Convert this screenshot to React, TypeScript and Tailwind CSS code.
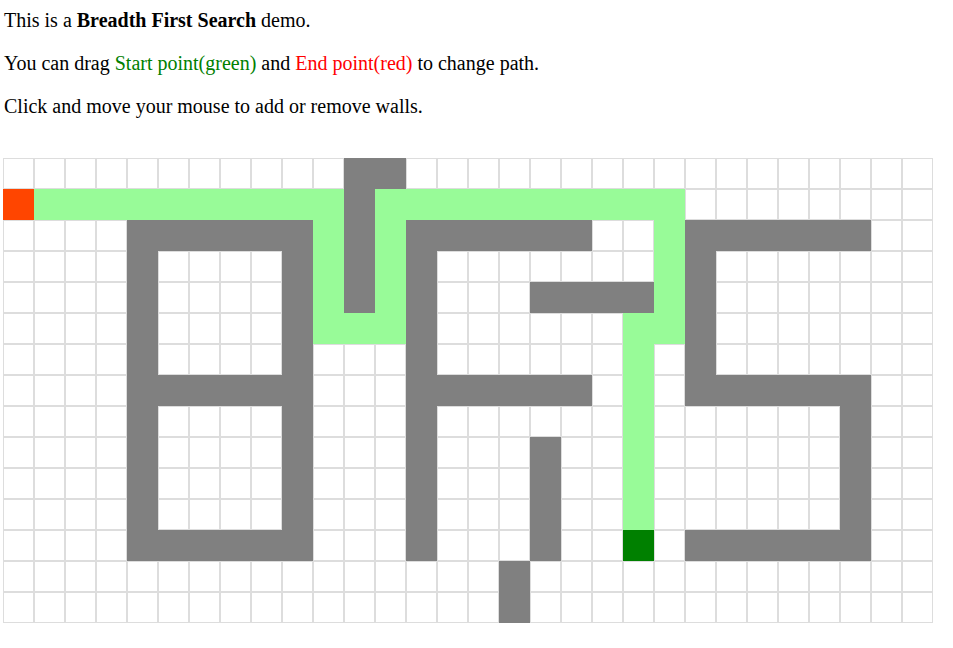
const ROWS = 15;
const COLS = 30;

type Cell = "." | "#" | "p" | "s" | "e";

function buildGrid(): Cell[][] {
  const g: Cell[][] = Array.from({ length: ROWS }, () => Array(COLS).fill(".") as Cell[]);
  const fill = (r0: number, r1: number, c0: number, c1: number, v: Cell) => {
    for (let r = r0; r <= r1; r++) for (let c = c0; c <= c1; c++) g[r][c] = v;
  };

  // walls: B
  fill(2, 12, 4, 4, "#");
  fill(2, 12, 9, 9, "#");
  fill(2, 2, 4, 9, "#");
  fill(7, 7, 4, 9, "#");
  fill(12, 12, 4, 9, "#");
  // walls: top divider
  fill(0, 4, 11, 11, "#");
  fill(0, 0, 12, 12, "#");
  // walls: F
  fill(2, 12, 13, 13, "#");
  fill(2, 2, 13, 18, "#");
  fill(7, 7, 13, 18, "#");
  fill(4, 4, 17, 20, "#");
  fill(9, 12, 17, 17, "#");
  fill(13, 14, 16, 16, "#");
  // walls: S
  fill(2, 2, 22, 27, "#");
  fill(2, 7, 22, 22, "#");
  fill(7, 7, 22, 27, "#");
  fill(7, 12, 27, 27, "#");
  fill(12, 12, 22, 27, "#");

  // path
  fill(1, 1, 1, 10, "p");
  fill(1, 5, 10, 10, "p");
  fill(5, 5, 10, 12, "p");
  fill(1, 5, 12, 12, "p");
  fill(1, 1, 12, 21, "p");
  fill(1, 5, 21, 21, "p");
  fill(5, 11, 20, 20, "p");

  g[1][0] = "s";
  g[12][20] = "e";
  return g;
}

const grid = buildGrid();

function GridCell({ v }: { v: Cell }) {
  if (v === "#") return <div className="bg-[#808080]" />;
  if (v === "p") return <div className="bg-[#98fb98]" />;
  if (v === "s") return <div className="bg-[#ff4500]" />;
  if (v === "e") return <div className="bg-[#008000]" />;
  return <div className="border border-[#dddddd] bg-white" />;
}

export default function App() {
  return (
    <div className="min-h-screen bg-white px-[3px] pt-[9px] font-['Liberation_Serif',serif] text-[20px] leading-[23px] text-black">
      <p className="mb-[20px] pl-[1px]">
        This is a <b>Breadth First Search</b> demo.
      </p>
      <p className="mb-[20px] pl-[1px]">
        You can drag <span className="text-[#008000]">Start point(green)</span> and{" "}
        <span className="text-[#ff0000]">End point(red)</span> to change path.
      </p>
      <p className="pl-[1px]">Click and move your mouse to add or remove walls.</p>

      <div className="mt-[40px] grid w-[930px] grid-cols-[repeat(30,31px)] grid-rows-[repeat(15,31px)]">
        {grid.map((row, r) => row.map((v, c) => <GridCell key={`${r}-${c}`} v={v} />))}
      </div>
    </div>
  );
}
